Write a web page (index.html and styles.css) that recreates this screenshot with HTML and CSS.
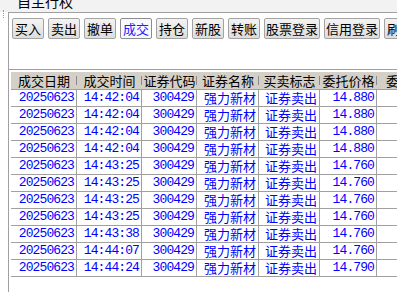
FILE: index.html
```html
<!DOCTYPE html>
<html>
<head>
<meta charset="utf-8">
<link rel="stylesheet" href="styles.css">
</head>
<body>
<div class="title"><span>自主行权</span></div>
<div class="main">
  <div class="side"><div class="dots"></div></div>
  <div class="panel">
    <div class="toolbar">
      <button class="btn">买入</button>
      <button class="btn">卖出</button>
      <button class="btn">撤单</button>
      <button class="btn active">成交</button>
      <button class="btn">持仓</button>
      <button class="btn">新股</button>
      <button class="btn">转账</button>
      <button class="btn wide">股票登录</button>
      <button class="btn wide">信用登录</button>
      <button class="btn">刷新</button>
    </div>
    <div class="table">
      <div class="head">
        <div class="hc">成交日期</div>
        <div class="hc">成交时间</div>
        <div class="hc">证券代码</div>
        <div class="hc">证券名称</div>
        <div class="hc">买卖标志</div>
        <div class="hc">委托价格</div>
        <div class="hc last">委托数量</div>
      </div>
      <div class="body" id="rows"></div>
    </div>
  </div>
</div>
<script src="app.js"></script>
</body>
</html>
```
FILE: app.js
```js
var data = [
  ["20250623","14:42:04","300429","强力新材","证券卖出","14.880"],
  ["20250623","14:42:04","300429","强力新材","证券卖出","14.880"],
  ["20250623","14:42:04","300429","强力新材","证券卖出","14.880"],
  ["20250623","14:42:04","300429","强力新材","证券卖出","14.880"],
  ["20250623","14:43:25","300429","强力新材","证券卖出","14.760"],
  ["20250623","14:43:25","300429","强力新材","证券卖出","14.760"],
  ["20250623","14:43:25","300429","强力新材","证券卖出","14.760"],
  ["20250623","14:43:25","300429","强力新材","证券卖出","14.760"],
  ["20250623","14:43:38","300429","强力新材","证券卖出","14.760"],
  ["20250623","14:44:07","300429","强力新材","证券卖出","14.760"],
  ["20250623","14:44:24","300429","强力新材","证券卖出","14.790"]
];
var html = "";
data.forEach(function (r) {
  html += '<div class="row">' +
    '<div class="c num">' + r[0] + '</div>' +
    '<div class="c num">' + r[1] + '</div>' +
    '<div class="c num">' + r[2] + '</div>' +
    '<div class="c cn">' + r[3] + '</div>' +
    '<div class="c cn">' + r[4] + '</div>' +
    '<div class="c num">' + r[5] + '</div>' +
    '<div class="c num"></div>' +
    '</div>';
});
document.getElementById("rows").innerHTML = html;
```
FILE: styles.css
```css
* { box-sizing: border-box; }
html, body {
  margin: 0;
  padding: 0;
  width: 397px;
  height: 292px;
  overflow: hidden;
  background: #ffffff;
  font-family: "Noto Sans CJK SC", sans-serif;
}
.title {
  height: 12px;
  background: #f2f2f2;
  overflow: hidden;
  padding-left: 17px;
}
.title span {
  display: block;
  font-size: 14px;
  line-height: 14px;
  margin-top: -6px;
  color: #000;
}
.main {
  display: flex;
  height: 280px;
}
.side {
  width: 8px;
  flex: none;
  background: #fff;
  position: relative;
}
.dots {
  position: absolute;
  left: 3px;
  top: -2px;
  height: 8px;
  border-left: 1px dotted #9a9a9a;
}
.panel {
  flex: 1;
  border-left: 1px solid #a0a0a0;
  border-top: 1px solid #a0a0a0;
  min-width: 0;
}
.toolbar {
  height: 57px;
  border-bottom: 1px solid #a0a0a0;
  display: flex;
  gap: 4px;
  padding: 5px 0 0 3px;
  white-space: nowrap;
  overflow: hidden;
}
.btn {
  flex: none;
  width: 32px;
  height: 21px;
  padding: 0;
  margin: 0;
  border: 1px solid #a3a3a3;
  border-radius: 2px;
  background: linear-gradient(#f3f3f3, #dddddd);
  font-family: "Noto Sans CJK SC", sans-serif;
  font-size: 13px;
  line-height: 19px;
  color: #000;
  text-align: center;
}
.btn.wide { width: 56px; }
.btn.active {
  background: #f8f8ff;
  border-color: #8c8c8c;
  color: #2020ff;
}
.table {
  padding: 2px 0 0 2px;
}
.head {
  display: grid;
  grid-template-columns: 66px 65px 55px 62px 61px 57px 70px;
  height: 17px;
  background: #d4d0c8;
}
.hc {
  position: relative;
  font-size: 13px;
  line-height: 17px;
  text-align: center;
  color: #000;
  white-space: nowrap;
  overflow: hidden;
}
.hc::after {
  content: "";
  position: absolute;
  right: 0;
  top: 4px;
  height: 9px;
  border-right: 1px solid #8a8a8a;
}
.hc.last::after { display: none; }
.body {
  border-top: 1px solid #a0a0a0;
}
.row {
  display: grid;
  grid-template-columns: 66px 65px 55px 62px 61px 57px 70px;
  height: 17px;
}
.c {
  border-right: 1px solid #a0a0a0;
  border-bottom: 1px solid #a0a0a0;
  text-align: right;
  padding-right: 2px;
  color: #0000ff;
  white-space: nowrap;
  overflow: hidden;
}
.c.num {
  font-family: "Liberation Mono", monospace;
  font-size: 13px;
  letter-spacing: -0.9px;
  line-height: 16px;
}
.c.cn {
  font-size: 13px;
  line-height: 16px;
}
```
